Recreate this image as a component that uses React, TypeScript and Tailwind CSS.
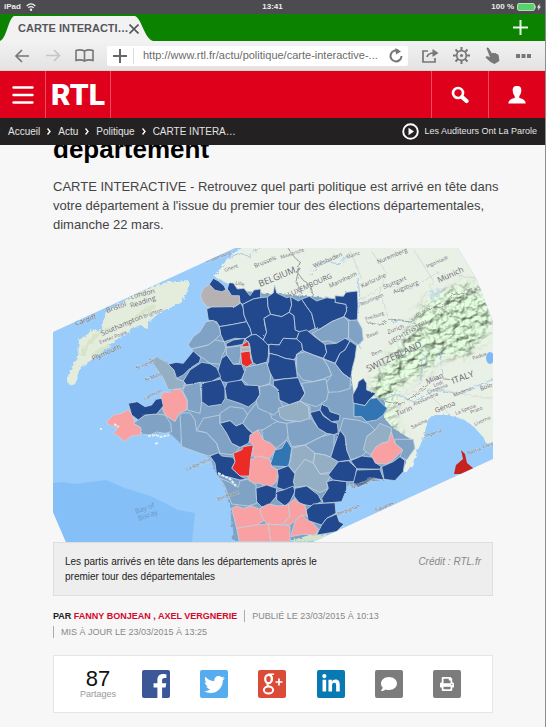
import type { ReactNode } from "react";
import { FaFacebookF, FaTwitter, FaLinkedinIn, FaComment, FaPrint } from "react-icons/fa";

const NAVY = "#224a8d";
const STEEL = "#80a3c5";
const SLATE = "#94aec4";
const PINK = "#f8a0a2";
const RED = "#ec2a27";
const BLUE = "#3175b3";
const GREY = "#b6b1b2";

type Region = [fill: string, points: string];

const WEST: Region[] = [
  [PINK, "168,98 190,75 215,70 235,58 250,82 255,100 275,115 272,135 245,138 222,155 210,142 190,130 203,114 184,108"],
  [STEEL, "250,100 285,75 320,72 345,75 362,100 365,125 345,130 320,126 300,135 275,132 272,112"],
  [NAVY, "235,40 262,35 285,50 305,45 318,28 335,25 340,48 320,72 285,75 265,90 245,75"],
];

const NORTH: Region[] = [
  [GREY, "152,60 160,40 178,28 195,45 215,48 232,42 245,62 268,62 270,82 255,95 215,98 172,96 157,78"],
  [NAVY, "178,28 190,10 205,18 222,32 228,45 215,50 195,46"],
  [NAVY, "232,42 237,24 250,24 262,42 282,40 300,62 312,45 332,42 332,68 310,72 278,88 270,82 268,62 245,62"],
  [NAVY, "170,102 185,96 255,95 272,84 280,98 282,120 290,140 250,148 208,155 200,140 175,135"],
  [NAVY, "278,88 310,72 332,68 352,66 354,95 362,118 342,130 345,152 350,172 340,195 318,178 305,182 300,160 290,140 282,120"],
  [NAVY, "352,66 370,54 374,30 380,54 410,68 422,65 425,90 418,112 395,125 362,118 354,95"],
  [NAVY, "208,155 250,148 290,140 300,160 305,178 285,192 255,190 222,200 212,178"],
  [NAVY, "342,130 362,118 395,125 418,112 432,122 436,165 448,170 440,192 400,190 388,210 362,208 350,210 340,195 350,172"],
  [NAVY, "422,65 445,78 455,72 470,95 485,115 496,160 470,172 448,170 436,165 432,122 418,112 425,90"],
  [NAVY, "455,72 478,64 500,78 530,68 560,72 555,82 590,88 590,108 582,125 545,140 510,162 496,160 485,115 470,95"],
  [NAVY, "555,62 580,64 588,52 622,48 624,90 622,135 604,138 582,125 590,108 588,88 556,82"],
  [STEEL, "486,175 510,162 545,140 582,125 596,140 596,188 560,205 535,198 515,200"],
  [STEEL, "596,136 622,135 636,160 640,195 625,210 596,190"],
  [STEEL, "114,210 130,185 150,170 168,140 190,136 206,150 212,178 195,195 175,210 125,222"],
  [STEEL, "125,222 175,210 195,195 222,200 228,220 215,245 215,268 180,265 160,250 135,235"],
  [NAVY, "228,206 250,195 285,190 278,208 258,212 230,216"],
  [STEEL, "228,218 272,212 274,232 268,265 250,268 230,240"],
  [NAVY, "305,180 318,178 340,195 356,212 355,245 350,262 320,270 308,262 302,235 298,205 285,192"],
  [NAVY, "356,212 362,208 388,210 400,190 440,192 455,205 458,225 440,238 435,255 405,250 380,240 358,235"],
  [NAVY, "440,192 448,170 470,165 500,190 525,208 530,232 520,250 490,240 465,230 458,225 455,205"],
  [NAVY, "525,208 560,205 585,190 600,198 585,225 570,235 555,265 530,255 520,250 530,232"],
  [NAVY, "600,198 620,212 615,250 607,280 602,312 578,295 555,268 570,235 585,225"],
  [STEEL, "440,238 465,230 490,240 520,252 535,275 545,300 520,312 490,320 458,315 440,290"],
  [NAVY, "358,235 380,240 405,250 435,255 440,290 442,308 400,312 372,315 350,275 356,260"],
  [STEEL, "520,252 555,265 578,295 602,312 600,340 570,350 535,352 528,325 545,300 535,275"],
  [STEEL, "284,290 290,276 320,270 350,262 362,300 360,325 335,335 300,335 275,312"],
  [NAVY, "215,250 230,240 250,268 275,268 284,290 275,312 250,326 215,320 203,290"],
  [SLATE, "2,255 20,245 50,262 80,290 82,312 105,320 100,340 55,345 40,310"],
  [NAVY, "55,268 78,262 100,265 130,228 152,248 148,262 120,280 100,300 80,310 72,285"],
  [NAVY, "100,318 120,285 155,262 180,266 200,278 212,305 180,322 150,322 135,328 110,330"],
  [STEEL, "105,332 150,322 155,380 150,415 112,405 112,375 98,348"],
  [NAVY, "155,325 212,312 225,340 225,370 215,388 175,394 155,380"],
  [NAVY, "225,340 232,322 275,315 285,330 325,332 330,358 318,378 295,396 270,385 230,372"],
  [STEEL, "328,335 360,328 385,345 388,375 400,395 370,420 325,400 318,378 330,358"],
  [NAVY, "370,318 400,312 445,308 455,335 465,355 450,378 420,390 388,375 385,345 370,330"],
  [STEEL, "455,325 490,320 528,312 535,352 530,375 500,395 465,385 450,378 465,355"],
  [SLATE, "385,400 420,388 450,378 475,395 478,430 450,440 405,435 390,425"],
  [PINK, "33,360 45,350 60,354 75,342 95,345 112,380 110,405 88,415 75,440 45,420 35,395"],
  [RED, "272,232 300,228 302,250 308,265 290,276 275,268"],
  [RED, "276,210 294,198 298,214 278,216"],
  [GREY, "274,217 300,215 300,228 272,231"],
  [NAVY, "608,360 622,335 625,320 640,310 650,325 650,345 678,355 660,372 645,392 610,385"],
  [BLUE, "612,385 645,392 660,372 680,368 695,385 712,400 700,420 680,435 650,440 635,425 612,425"],
];

const SOUTH: Region[] = [
  [STEEL, "0,40 30,38 45,60 50,92 80,98 110,130 120,160 85,168 60,160 5,140"],
  [STEEL, "50,92 70,55 120,45 120,70 140,100 155,130 180,142 160,165 120,160 110,130 80,98"],
  [STEEL, "120,40 150,20 190,25 205,48 188,70 168,78 150,62 120,70"],
  [STEEL, "205,40 230,8 265,20 275,55 295,65 250,90 235,90 218,100 188,70"],
  [SLATE, "320,60 325,30 350,5 390,20 390,50 345,65"],
  [STEEL, "245,92 290,65 320,70 330,90 320,120 285,148 250,120"],
  [STEEL, "320,70 345,65 390,50 415,85 440,100 425,110 375,135 335,140 325,115"],
  [STEEL, "375,135 425,110 462,100 462,140 452,172 435,165 405,160"],
  [SLATE, "335,145 375,135 405,160 400,190 375,178 345,218 325,197 332,180"],
  [SLATE, "405,160 435,165 452,172 475,185 460,215 420,222 400,190"],
  [SLATE, "340,245 345,215 375,178 400,190 420,222 455,222 440,248 445,265 420,278 380,258 345,262"],
  [STEEL, "480,90 490,55 530,60 565,70 585,90 560,110 565,150 545,168 512,180 500,150 495,110"],
  [SLATE, "560,110 585,90 600,70 635,85 634,95 625,125 605,130 572,165 550,150"],
  [STEEL, "645,118 700,118 705,145 680,180 660,170 668,150 645,130"],
  [NAVY, "120,70 150,62 168,78 188,70 205,90 218,100 205,130 180,142 155,130 140,100"],
  [PINK, "208,125 210,105 235,90 250,120 270,128 288,145 270,175 240,170 218,170 220,135"],
  [PINK, "212,180 235,168 270,178 275,200 295,210 290,245 265,265 240,250 220,250 203,235"],
  [RED, "160,160 185,150 190,140 220,135 212,180 208,228 180,228 155,205 165,185"],
  [BLUE, "272,190 285,150 305,145 320,120 335,145 330,180 325,200 275,198"],
  [NAVY, "90,168 115,158 125,168 160,172 165,185 155,205 180,228 200,238 180,240 150,232 110,225 105,190"],
  [STEEL, "120,235 145,245 175,262 180,242 203,238 228,255 230,310 205,318 155,312 135,260"],
  [NAVY, "292,210 325,197 345,222 340,245 345,262 320,272 290,262 295,230"],
  [NAVY, "228,265 260,255 290,265 288,290 265,318 245,320 230,305"],
  [NAVY, "290,275 310,270 340,258 345,275 330,305 315,318 290,300"],
  [NAVY, "345,265 380,258 415,285 425,305 395,318 360,312 342,288"],
  [NAVY, "440,245 460,240 500,245 500,268 485,305 430,310 425,295 445,265"],
  [NAVY, "378,330 400,312 430,310 465,308 468,340 440,355 425,375 385,362"],
  [NAVY, "425,375 440,355 470,342 478,365 492,372 470,395 430,402 410,405"],
  [NAVY, "445,225 475,185 505,182 530,205 525,245 500,245 460,240"],
  [NAVY, "480,90 495,110 500,150 512,180 475,185 452,172 462,140"],
  [NAVY, "512,182 545,168 580,172 585,188 605,200 600,208 530,206"],
  [NAVY, "530,210 600,208 612,240 580,235 560,250 535,262 520,248"],
  [NAVY, "605,200 640,185 660,170 675,182 670,215 645,242 612,238"],
  [NAVY, "390,38 420,30 430,48 455,65 472,70 475,98 462,104 440,100 415,85 400,60"],
  [NAVY, "425,12 445,22 450,35 480,45 478,62 455,65 430,45 420,30"],
  [PINK, "572,165 588,140 605,130 625,125 634,95 645,130 668,150 640,180 620,192 588,190"],
  [PINK, "155,325 170,318 190,325 215,318 240,328 255,360 230,375 170,385"],
  [PINK, "240,325 265,312 295,318 325,315 330,350 305,375 260,372 245,350"],
  [PINK, "325,312 345,296 350,305 375,315 382,350 365,345 330,375 308,372 330,350"],
  [PINK, "170,385 230,375 265,372 272,425 178,425"],
  [PINK, "265,372 305,375 330,378 330,425 272,425"],
  [PINK, "345,365 365,345 385,362 400,370 415,388 405,405 370,403 332,410"],
];

function Regions({ items, x, y }: { items: Region[]; x: number; y: number }) {
  return (
    <g transform={`translate(${x} ${y}) scale(0.3333)`} stroke="#c3d3e2" strokeWidth="2.4" strokeLinejoin="round" filter="url(#coast)">
      {items.map(([fill, points], i) => (
        <polygon key={i} fill={fill} points={points} />
      ))}
    </g>
  );
}

type Label = [text: string, x: number, y: number, size: number, angle: number];

const LABELS: Label[] = [
  ["Cardiff", 76, 326, 7, -20],
  ["Bristol", 107, 313, 7, -20],
  ["London", 131, 299, 7, -14],
  ["Reading", 131, 308, 7, -18],
  ["Southampton", 102, 336, 7, -23],
  ["Brighton", 144, 318, 5, -20],
  ["Exeter Poole", 100, 344, 5, -21],
  ["Plymouth", 93, 361, 7, -24],
  ["Middelburg", 206, 263, 5, -20],
  ["Ghent", 225, 272, 5, -20],
  ["Brussels", 255, 268, 6, -22],
  ["Lille", 235, 284, 5, 15],
  ["BELGIUM", 260, 287, 9, -22],
  ["LUXEMBOURG", 289, 297, 7, -24],
  ["Maastricht", 281, 259, 5, -18],
  ["Wiesbaden", 314, 268, 6, -23],
  ["Mainz", 347, 259, 5, -20],
  ["Mannheim", 330, 288, 6, -25],
  ["Karlsruhe", 362, 288, 6, -25],
  ["Nuremberg", 378, 264, 6, -23],
  ["Stuttgart", 384, 289, 6, -22],
  ["Augsburg", 394, 294, 6, -22],
  ["Ingolstadt", 427, 268, 5, -23],
  ["Munich", 439, 283, 8, -25],
  ["Reutlingen", 361, 306, 5, -23],
  ["Freiburg", 366, 321, 5, -20],
  ["Zurich", 388, 334, 6, -20],
  ["Basel", 367, 338, 5, -20],
  ["Bern", 372, 356, 5, -20],
  ["LIECHTENSTEIN", 390, 345, 6, -30],
  ["SWITZERLAND", 368, 372, 9, -25],
  ["Milan", 427, 384, 7, -22],
  ["ITALY", 453, 384, 9, -20],
  ["Padua", 473, 360, 5, -20],
  ["Lodi", 434, 387, 5, -20],
  ["Cremona", 428, 394, 5, -20],
  ["Bolo", 481, 391, 6, -22],
  ["Turin", 397, 416, 7, -22],
  ["Genoa", 436, 413, 7, -22],
  ["Alessandria", 414, 406, 5, -24],
  ["Modena", 454, 397, 5, -22],
  ["La Spezia", 456, 415, 5, -22],
  ["Prato", 471, 414, 5, -22],
  ["Livorno", 475, 426, 5, -25],
  ["Savona", 412, 429, 5, -25],
  ["Imperia", 425, 438, 5, -20],
  ["Bastia, Corse", 468, 455, 5, -22],
  ["Perpignan", 338, 516, 5, -22],
  ["Figueres", 376, 512, 5, -22],
  ["Marseille", 352, 489, 6, -20],
  ["La Rochelle", 187, 471, 5, -23],
  ["Bordeaux", 218, 501, 5, -20],
  ["St Helier", 137, 370, 5, -24],
  ["St Malo", 146, 382, 5, -24],
  ["Lannion", 145, 400, 5, -24],
];

function ElectionMap() {
  return (
    <svg viewBox="53 248 440 294" className="block w-full" role="img" aria-label="Carte des départements">
      <defs>
        <clipPath id="frame">
          <polygon points="53,332 235,248 458,248 477,280 493,322 493,459 313,542 66,542 53,512" />
        </clipPath>
        <filter id="coast">
          <feTurbulence type="fractalNoise" baseFrequency="0.25" numOctaves="2" seed="4" />
          <feDisplacementMap in="SourceGraphic" scale="5" />
        </filter>
        <filter id="relief" x="0" y="0" width="1" height="1" colorInterpolationFilters="sRGB">
          <feTurbulence type="fractalNoise" baseFrequency="0.1 0.13" numOctaves="4" seed="8" />
          <feColorMatrix values="0 0 0 0 0  0 0 0 0 0  0 0 0 0 0  1 0 0 0 0" />
          <feDiffuseLighting surfaceScale="4" diffuseConstant="1.15" lightingColor="#cdebc8" result="lit">
            <feDistantLight azimuth="225" elevation="62" />
          </feDiffuseLighting>
          <feComposite in="lit" in2="SourceGraphic" operator="in" />
        </filter>
        <filter id="feather">
          <feGaussianBlur stdDeviation="5" />
        </filter>
        <mask id="alpsMask">
          <polygon points="366,404 374,378 402,342 422,306 444,292 466,282 500,298 490,330 470,355 440,358 424,374 400,385 392,420 406,440 386,440 382,408" fill="#fff" filter="url(#feather)" />
        </mask>
      </defs>
      <g clipPath="url(#frame)">
        <rect x="53" y="248" width="440" height="294" fill="#99ccfb" />
        <polygon points="53,483 62,482 75,484 106,480 125,488 150,496 165,503 178,510 195,513 192,542 53,542" fill="#84c0f7" />
        <g filter="url(#coast)">
          <polygon
            points="66,382 70,370 78,358 79,340 92,331 102,329 103,321 108,311 130,297 150,287 163,283 177,281 189,280 189,289 181,303 160,312 148,323 148,329 139,325 130,331 115,340 105,349 93,359 82,366 77,372 78,382 72,385"
            fill="#e4eddc"
          />
          <polygon
            points="242,248 228,257 222,267 213,276 240,290 245,400 360,460 392,475 410,470 418,450 424,437 427,422 435,415 447,415 463,419 474,427 484,438 487,444 500,440 500,240 250,240"
            fill="#e9f0e5"
          />
          <polygon points="280,541 300,535 330,535 345,525 330,542" fill="#d3e3c8" />
          <path d="M82,356 q10,-24 28,-27 M92,355 l18,-10 M125,325 l30,-20" stroke="#d6e5ca" strokeWidth="4" fill="none" />
        </g>
        <g mask="url(#alpsMask)" opacity="0.85">
          <rect x="364" y="275" width="135" height="170" fill="#bbdcae" filter="url(#relief)" />
        </g>
        <g fill="none" stroke="#a6c8e8" strokeWidth="1" filter="url(#coast)">
          <path d="M228,258 l12,-5 8,3 12,-8 M310,275 l12,-14 18,3 10,-12 M360,348 l-4,-28 4,-22 -2,-20 M392,322 l14,-1 12,4" />
          <path d="M376,403 l20,-9 18,8 20,-12 22,4 38,-15 M420,384 l4,-30 M440,350 l2,24" />
          <path d="M432,300 v-10 M438,298 v-10" stroke="#bfe0e8" strokeWidth="3" />
        </g>
        <g fill="none" stroke="#9c9c9e" strokeWidth="1" filter="url(#coast)">
          <path d="M288,248 l6,9 6,5 -3,10 6,8 8,6 2,10 M300,262 l-4,20 6,12" />
          <path d="M366,322 l14,3 10,-6 20,2 16,-12 16,-2 10,-12 16,-4 22,-6 M382,400 l18,4 14,-8 22,-18 18,2" />
        </g>
        <g fill="none" stroke="#d6dad3" strokeWidth="1" filter="url(#coast)">
          <path d="M362,300 l20,-14 30,2 25,-15 40,5 M372,252 l14,20 -6,20 8,25 M414,250 l20,32 -18,25 M350,250 l12,30 M395,395 l40,-6 58,10 M430,395 l20,20" />
        </g>
        <ellipse cx="490" cy="358" rx="4" ry="6" fill="#7fb9f4" />
        <polygon
          filter="url(#coast)"
          fill={STEEL}
          points="150,360 157,357 167,362 177,373 200,345 215,330 210,300 230,290 356,300 357,320 360,340 352,352 351,375 354,395 384,400 384,418 393,428 412,440 408,456 400,472 385,478 355,484 340,486 334,505 336,520 325,530 290,541 233,541 230,505 224,485 214,470 211,458 190,448 182,445 175,438 168,432 141,434 138,420 165,400 172,388"
        />
        <Regions items={SOUTH} x={180} y={400} />
        <Regions items={NORTH} x={150} y={275} />
        <Regions items={WEST} x={50} y={390} />
        <path d="M148,436 l8,-1 5,2 8,-2 M158,443 l-4,1 M100,429 h2 M114,424 l5,3 M218,473 l12,6 6,7" stroke="#e6f0f8" strokeWidth="2" fill="none" strokeDasharray="3 1" />
        <polygon points="454,474 456,465 463,459 461,450 465,454 467,463 473,468 473,474" fill="#c52220" />
        <g fontFamily="'Open Sans', 'Liberation Sans', sans-serif" fill="#62646b">
          {LABELS.map(([text, x, y, size, angle]) => (
            <text key={text} x={x} y={y} fontSize={size} transform={`rotate(${angle} ${x} ${y})`} stroke="#ffffff" strokeWidth="0.6" strokeOpacity="0.5" paintOrder="stroke">
              {text}
            </text>
          ))}
          <text x="136" y="514" fontSize="7" fill="#6a96c4" transform="rotate(-20 136 514)">Bay of</text>
          <text x="139" y="521" fontSize="7" fill="#6a96c4" transform="rotate(-20 139 521)">Biscay</text>
        </g>
      </g>
    </svg>
  );
}

function ToolButton({ label, children }: { label: string; children: ReactNode }) {
  return (
    <button type="button" aria-label={label} className="flex h-6 w-5 shrink-0 items-center justify-center text-[#777]">
      {children}
    </button>
  );
}

function StatusBar() {
  return (
    <div className="grid h-[14px] grid-cols-3 items-center bg-[#4b4b50] px-[4px] text-[8px] font-bold leading-[14px] text-[#eee]">
      <div className="flex items-center gap-[5px]">
        <span>iPad</span>
        <svg width="10" height="8" viewBox="0 0 10 8" fill="none" stroke="#eee" strokeWidth="1.3">
          <path d="M.7 3 Q5 -1.2 9.3 3 M2.4 4.8 Q5 2.4 7.6 4.8" />
          <circle cx="5" cy="6.7" r=".6" fill="#eee" />
        </svg>
      </div>
      <div className="text-center">13:41</div>
      <div className="flex items-center justify-end gap-[3px]">
        <span>100 %</span>
        <svg width="24" height="8" viewBox="0 0 24 8">
          <rect x=".5" y=".5" width="17" height="7" rx="1.5" fill="#57d26a" stroke="#b5dcba" />
          <path d="M18.5 2.5 v3" stroke="#aaa" />
          <path d="M22.7 .5 L20 4.5 h1.5 L21 7.5 L24 3.5 h-1.7z" fill="#eee" />
        </svg>
      </div>
    </div>
  );
}

function BrowserChrome() {
  return (
    <>
      <div className="flex h-[27px] items-end justify-between bg-[#0b8200]">
        <div className="relative h-[25px] w-[153px]">
          <svg className="absolute inset-0 h-full w-full" viewBox="0 0 153 25" preserveAspectRatio="none">
            <path d="M0 25 C7 22 8 3 14 0 H135 C142 3 144 22 153 25Z" fill="#f2f2f2" />
          </svg>
          <div className="relative flex h-full items-center justify-between pl-[18px] pr-[17px] text-[11px] font-bold text-[#55565a]">
            <span className="whitespace-nowrap">CARTE INTERACTI…</span>
            <button type="button" aria-label="Fermer l'onglet" className="shrink-0">
              <svg width="10" height="10" viewBox="0 0 10 10" stroke="#555" strokeWidth="1.6"><path d="M.5 .5 9.5 9.5 M9.5 .5 .5 9.5" /></svg>
            </button>
          </div>
        </div>
        <button type="button" aria-label="Nouvel onglet" className="mr-[17px] flex h-full items-center">
          <svg width="15" height="15" viewBox="0 0 15 15" stroke="#e8f8e6" strokeWidth="2"><path d="M7.5 0 V15 M0 7.5 H15" /></svg>
        </button>
      </div>
      <div className="flex h-[30px] items-center border-b border-[#d7d2d2] bg-linear-to-b from-[#f2f2f2] to-[#e3e3e3] pl-3 pr-3">
        <div className="flex gap-[11px]">
          <ToolButton label="Précédent">
            <svg width="16" height="14" viewBox="0 0 16 14" fill="none" stroke="currentColor" strokeWidth="1.7"><path d="M15 7 H2 M8 1 L2 7 L8 13" /></svg>
          </ToolButton>
          <ToolButton label="Suivant">
            <svg width="15" height="13" viewBox="0 0 15 13" fill="none" stroke="#c6c6c6" strokeWidth="1.7"><path d="M0 6.500 H13 M8 1 L13.500 6.500 L8 12" /></svg>
          </ToolButton>
          <ToolButton label="Favoris">
            <svg width="19" height="13" viewBox="0 0 19 13" fill="none" stroke="currentColor" strokeWidth="1.6"><path d="M9.500 2 Q5.500 0 1 1.500 V11.500 Q5.500 10 9.500 12 Q13.500 10 18 11.500 V1.500 Q13.500 0 9.500 2 V12" /></svg>
          </ToolButton>
        </div>
        <div className="ml-[13px] mr-3 flex h-5 min-w-0 flex-1 items-center rounded-xs bg-white pl-[6px] pr-1">
          <button type="button" aria-label="Ajouter aux favoris">
            <svg width="14" height="14" viewBox="0 0 14 14" stroke="#666" strokeWidth="2"><path d="M7 0 V14 M0 7 H14" /></svg>
          </button>
          <span className="ml-[6px] mr-[9px] h-4 w-px bg-[#ddd]" />
          <input
            aria-label="Adresse"
            defaultValue="http://www.rtl.fr/actu/politique/carte-interactive-..."
            className="min-w-0 flex-1 bg-transparent text-[11px] text-[#6b6b6b] outline-none"
          />
          <button type="button" aria-label="Recharger">
            <svg width="16" height="16" viewBox="0 0 16 16" fill="none" stroke="#777" strokeWidth="2"><path d="M10.500 3 A5.500 5.500 0 1 0 13.500 8" /><path d="M7.500 0 L13 3.500 L8 6.500Z" fill="#777" stroke="none" /></svg>
          </button>
        </div>
        <div className="flex gap-[11px]">
          <ToolButton label="Partager">
            <svg width="18" height="16" viewBox="0 0 18 16" fill="none" stroke="currentColor" strokeWidth="1.7"><path d="M7 3 H2 V14 H14 V10 M6 9 Q7 5 13 5" /><path d="M11.500 1 L17.500 5 L11.500 9Z" fill="currentColor" stroke="none" /></svg>
          </ToolButton>
          <ToolButton label="Réglages">
            <svg width="17" height="17" viewBox="0 0 17 17" fill="none" stroke="currentColor"><circle cx="8.500" cy="8.500" r="4.800" strokeWidth="1.700" /><circle cx="8.500" cy="8.500" r="1.600" fill="currentColor" stroke="none" /><path d="M8.500 0 V3.500 M8.500 13.500 V17 M0 8.500 H3.500 M13.500 8.500 H17 M2.500 2.500 L5 5 M12 12 L14.500 14.500 M14.500 2.500 L12 5 M5 12 L2.500 14.500" strokeWidth="2" /></svg>
          </ToolButton>
          <ToolButton label="Gestes">
            <svg width="15" height="17" viewBox="0 0 15 17" fill="currentColor"><path d="M1.500 1.200 Q2.500 -.2 3.800 1.200 L7 6.500 Q8 5.200 9.300 6.300 Q10.800 5.400 11.600 7 Q13.300 6.700 13.700 8.700 L14.300 14 L9.500 17 Q5 15.500 .5 10.500 Q1 8.700 3.200 9.600 L5 10.300Z" /></svg>
          </ToolButton>
          <ToolButton label="Plus">
            <svg width="15" height="4" viewBox="0 0 15 4" fill="currentColor"><path d="M0 0h4v4H0z M5.500 0h4v4h-4z M11 0h4v4h-4z" /></svg>
          </ToolButton>
        </div>
      </div>
    </>
  );
}

function SiteHeader() {
  return (
    <header className="flex h-[47px] bg-[#df001b]">
      <button type="button" aria-label="Menu" className="flex w-[45px] items-center justify-center">
        <svg width="22" height="18" viewBox="0 0 22 18" stroke="#fff" strokeWidth="2.400" strokeLinecap="round"><path d="M1.500 1.500 H20.500 M1.500 9 H20.500 M1.500 16.500 H20.500" /></svg>
      </button>
      <a href="#accueil" className="flex w-[66px] items-center justify-center border-x border-[#ee4b5d] font-['Roboto','Liberation_Sans',sans-serif] text-[30px] font-black leading-none text-white">
        RTL
      </a>
      <div className="flex-1" />
      <button type="button" aria-label="Rechercher" className="flex w-[58px] items-center justify-center border-x border-[#ee4b5d]">
        <svg width="18" height="18" viewBox="0 0 18 18" fill="none" stroke="#fff"><circle cx="7" cy="7" r="5" strokeWidth="2.600" /><path d="M11 11 L15.500 15" strokeWidth="4.200" strokeLinecap="round" /></svg>
      </button>
      <button type="button" aria-label="Mon compte" className="flex w-[56px] items-center justify-center">
        <svg width="18" height="18" viewBox="0 0 18 18" fill="#fff"><path d="M9 0 C12.500 0 13.800 2 13.200 5.500 C13 8 12 9 11.300 10 V12 Q17.500 13 17.700 17.500 H.3 Q.5 13 6.700 12 V10 C6 9 5 8 4.800 5.500 C4.200 2 5.500 0 9 0Z" /></svg>
      </button>
    </header>
  );
}

function Breadcrumb() {
  const chevron = (
    <svg width="4" height="7" viewBox="0 0 4 7" fill="none" stroke="#fff" strokeWidth="1.400"><path d="M.5 .5 L3 3.500 L.5 6.500" /></svg>
  );
  return (
    <nav className="flex h-[27px] items-center justify-between bg-[#232122] px-2 text-[#e4e4e4]">
      <div className="flex items-center gap-[7px] text-[10px]">
        <a href="#accueil">Accueil</a>
        {chevron}
        <a href="#actu">Actu</a>
        {chevron}
        <a href="#politique">Politique</a>
        {chevron}
        <span>CARTE INTERA…</span>
      </div>
      <a href="#direct" className="flex items-center gap-[5px] text-[9px]">
        <svg width="17" height="17" viewBox="0 0 17 17"><circle cx="8.500" cy="8.500" r="7.300" fill="none" stroke="#fff" strokeWidth="1.900" /><path d="M6.500 4.800 L12 8.500 L6.500 12.200Z" fill="#fff" /></svg>
        Les Auditeurs Ont La Parole
      </a>
    </nav>
  );
}

function Share({ label, color, children }: { label: string; color: string; children: ReactNode }) {
  return (
    <button type="button" aria-label={label} className={`flex h-7 w-7 shrink-0 items-center justify-center overflow-hidden rounded-xs text-white ${color}`}>
      {children}
    </button>
  );
}

export default function App() {
  return (
    <div className="min-h-screen border-r border-[#8d8d8d] bg-[#f7f7f7] font-['Liberation_Sans',Arial,sans-serif]">
      <StatusBar />
      <BrowserChrome />
      <SiteHeader />
      <Breadcrumb />
      <main className="pl-[53px] pr-[52px]">
        <div className="flex h-5 items-end overflow-hidden">
          <h1 className="text-[26px] font-bold leading-8 text-black">département</h1>
        </div>
        <p className="-mr-3 mt-3 text-[13px] leading-[19px] text-[#444]">
          CARTE INTERACTIVE - Retrouvez quel parti politique est arrivé en tête dans votre département à l'issue du premier tour des élections départementales, dimanche 22 mars.
        </p>
        <figure className="mt-[14px]">
          <ElectionMap />
          <figcaption className="flex justify-between border border-[#dedede] bg-[#eeeeee] px-[11px] py-[11px] text-[10px] leading-[15px]">
            <span className="w-[270px] text-[#222]">Les partis arrivés en tête dans les départements après le premier tour des départementales</span>
            <em className="text-[#888]">Crédit : RTL.fr</em>
          </figcaption>
        </figure>
        <div className="mt-[14px] flex flex-wrap items-center gap-y-1 text-[9px] leading-[12px] text-[#888]">
          <span className="pr-[7px] font-bold text-[#d4092b]">
            <span className="text-[#222]">PAR</span> <a href="#fanny">FANNY BONJEAN</a> , <a href="#axel">AXEL VERGNERIE</a>
          </span>
          <span className="border-l border-[#aaa] pl-[7px] pr-8">PUBLIÉ LE 23/03/2015 À 10:13</span>
          <span className="border-l border-[#aaa] pl-[7px]">MIS À JOUR LE 23/03/2015 À 13:25</span>
        </div>
        <section className="mt-[17px] flex h-[58px] items-center justify-between border border-[#e5e5e5] bg-white pl-[30px] pr-[31px]">
          <div className="flex w-7 shrink-0 flex-col items-center">
            <div className="text-[22px] leading-[20px] text-[#111]">87</div>
            <div className="text-[9px] leading-[10px] text-[#999]">Partages</div>
          </div>
          <Share label="Facebook" color="bg-[#3b5797]"><FaFacebookF className="mt-1 ml-2" size={24} /></Share>
          <Share label="Twitter" color="bg-[#55acee]"><FaTwitter size={21} /></Share>
          <Share label="Google+" color="bg-[#dc4b38]">
            <svg width="24" height="24" viewBox="0 0 24 24" fill="none" stroke="#fff">
              <ellipse cx="8.500" cy="7" rx="3.300" ry="4.200" strokeWidth="2.200" />
              <path d="M8 2.200 H14 M10.500 2.500 Q13.500 6 11.500 9.500" strokeWidth="1.400" />
              <path d="M8.500 11.200 Q6 13 9 14.500" strokeWidth="1.800" />
              <ellipse cx="8.500" cy="18" rx="4.600" ry="3.500" strokeWidth="2" />
              <path d="M19 6.500 V13.500 M15.500 10 H22.500" strokeWidth="1.700" />
            </svg>
          </Share>
          <Share label="LinkedIn" color="bg-[#0979b4]"><FaLinkedinIn size={20} /></Share>
          <Share label="Commenter" color="bg-[#7c7c7c]"><FaComment size={16} /></Share>
          <Share label="Imprimer" color="bg-[#7c7c7c]"><FaPrint size={14} /></Share>
        </section>
      </main>
    </div>
  );
}
